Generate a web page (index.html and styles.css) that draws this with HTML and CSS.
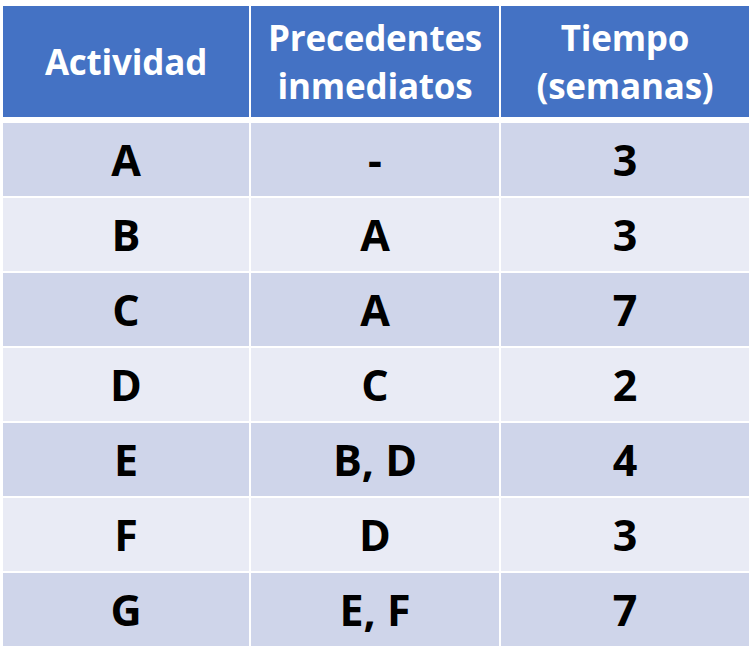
FILE: index.html
```html
<!DOCTYPE html>
<html>
<head>
<meta charset="utf-8">
<link rel="stylesheet" href="styles.css">
</head>
<body>
<div class="table">
  <div class="row header">
    <div class="cell head">Actividad</div>
    <div class="cell head">Precedentes<br>inmediatos</div>
    <div class="cell head">Tiempo<br>(semanas)</div>
  </div>
  <div class="body">
    <div class="cell odd">A</div><div class="cell odd">-</div><div class="cell odd">3</div>
    <div class="cell even">B</div><div class="cell even">A</div><div class="cell even">3</div>
    <div class="cell odd">C</div><div class="cell odd">A</div><div class="cell odd">7</div>
    <div class="cell even">D</div><div class="cell even">C</div><div class="cell even">2</div>
    <div class="cell odd">E</div><div class="cell odd">B, D</div><div class="cell odd">4</div>
    <div class="cell even">F</div><div class="cell even">D</div><div class="cell even">3</div>
    <div class="cell odd">G</div><div class="cell odd">E, F</div><div class="cell odd">7</div>
  </div>
</div>
</body>
</html>
```
FILE: styles.css
```css
html, body {
  margin: 0;
  padding: 0;
  background: #ffffff;
}
body {
  padding: 6px 0 0 3px;
  font-family: "Open Sans", "Liberation Sans", sans-serif;
  font-weight: 700;
}
.table {
  width: 746px;
  display: flex;
  flex-direction: column;
  gap: 6px;
}
.header,
.body {
  display: grid;
  grid-template-columns: 246px 248px 248px;
  column-gap: 2px;
}
.header {
  grid-template-rows: 111px;
}
.body {
  grid-template-rows: repeat(7, 73px);
  row-gap: 2px;
}
.cell {
  display: flex;
  align-items: center;
  justify-content: center;
  text-align: center;
}
.head {
  background: #4472c4;
  color: #ffffff;
  font-size: 35px;
  line-height: 48px;
  letter-spacing: -0.2px;
}
.odd,
.even {
  color: #000000;
  font-size: 43px;
}
.odd {
  background: #cfd5ea;
}
.even {
  background: #e9ebf5;
}
```
